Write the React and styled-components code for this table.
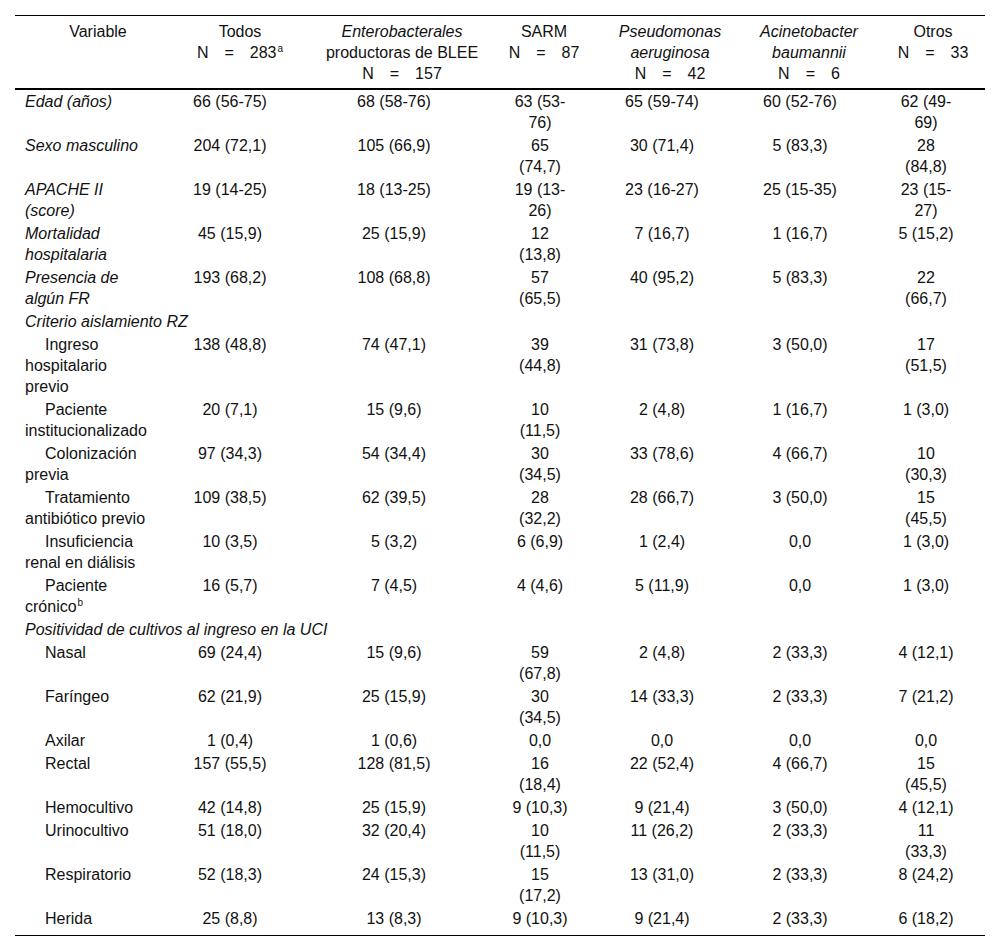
import React from "react";
import styled, { createGlobalStyle } from "styled-components";

const GlobalStyle = createGlobalStyle`
  html, body {
    margin: 0;
    padding: 0;
    background: #ffffff;
  }
  body {
    font-family: "Liberation Sans", Arial, sans-serif;
    color: #111111;
  }
`;

const Page = styled.div`
  padding: 15px 15px 0;
  width: 970px;
`;

const Table = styled.table`
  width: 970px;
  table-layout: fixed;
  border-collapse: separate;
  border-spacing: 0;
  border-top: 1px solid #000;
  border-bottom: 1px solid #000;
  font-size: 16px;
  line-height: 21px;
`;

const HeadCell = styled.th`
  font-weight: normal;
  text-align: center;
  vertical-align: top;
  padding: 5px 0 4px ${(p) => p.$shift * 2}px;
  border-bottom: 2px solid #000;
`;

const HeadLine = styled.span`
  display: block;
  white-space: nowrap;
  font-style: ${(p) => (p.$italic ? "italic" : "normal")};
`;

const Sup = styled.sup`
  font-size: 10px;
  line-height: 0;
  vertical-align: 6px;
  margin-left: 1px;
`;

const Row = styled.tr`
  &:last-child td {
    padding-bottom: 6px;
  }
`;

const LabelCell = styled.td`
  padding: 1px 10px;
  vertical-align: top;
  text-align: left;
  font-style: ${(p) => (p.$italic ? "italic" : "normal")};
  text-indent: ${(p) => (p.$indent ? "20px" : "0")};
`;

const SectionCell = styled.td`
  padding: 1px 10px;
  text-align: left;
  font-style: italic;
  white-space: nowrap;
`;

const ValueCell = styled.td`
  padding: 1px ${(p) => p.$pad}px;
  vertical-align: top;
  text-align: center;
`;

const columns = [
  { width: 146, pad: 10, shift: 10 },
  { width: 138, pad: 10, shift: 10 },
  { width: 190, pad: 6, shift: 8 },
  { width: 102, pad: 21, shift: 4 },
  { width: 142, pad: 10, shift: 8 },
  { width: 134, pad: 10, shift: 9 },
  { width: 118, pad: 29, shift: 7 },
];

const headers = [
  [{ t: "Variable" }],
  [{ t: "Todos" }, { t: "N\u2003=\u2003283", sup: "a" }],
  [
    { t: "Enterobacterales", i: true },
    { t: "productoras de BLEE" },
    { t: "N\u2003=\u2003157" },
  ],
  [{ t: "SARM" }, { t: "N\u2003=\u200387" }],
  [{ t: "Pseudomonas", i: true }, { t: "aeruginosa", i: true }, { t: "N\u2003=\u200342" }],
  [{ t: "Acinetobacter", i: true }, { t: "baumannii", i: true }, { t: "N\u2003=\u20036" }],
  [{ t: "Otros" }, { t: "N\u2003=\u200333" }],
];

const rows = [
  { label: "Edad (años)", italic: true, v: ["66 (56-75)", "68 (58-76)", "63 (53-76)", "65 (59-74)", "60 (52-76)", "62 (49-69)"] },
  { label: "Sexo masculino", italic: true, v: ["204 (72,1)", "105 (66,9)", "65 (74,7)", "30 (71,4)", "5 (83,3)", "28 (84,8)"] },
  { label: "APACHE II (score)", italic: true, v: ["19 (14-25)", "18 (13-25)", "19 (13-26)", "23 (16-27)", "25 (15-35)", "23 (15-27)"] },
  { label: "Mortalidad hospitalaria", italic: true, v: ["45 (15,9)", "25 (15,9)", "12 (13,8)", "7 (16,7)", "1 (16,7)", "5 (15,2)"] },
  { label: "Presencia de algún FR", italic: true, v: ["193 (68,2)", "108 (68,8)", "57 (65,5)", "40 (95,2)", "5 (83,3)", "22 (66,7)"] },
  { section: "Criterio aislamiento RZ" },
  { label: "Ingreso hospitalario previo", indent: true, v: ["138 (48,8)", "74 (47,1)", "39 (44,8)", "31 (73,8)", "3 (50,0)", "17 (51,5)"] },
  { label: "Paciente institucionalizado", indent: true, v: ["20 (7,1)", "15 (9,6)", "10 (11,5)", "2 (4,8)", "1 (16,7)", "1 (3,0)"] },
  { label: "Colonización previa", indent: true, v: ["97 (34,3)", "54 (34,4)", "30 (34,5)", "33 (78,6)", "4 (66,7)", "10 (30,3)"] },
  { label: "Tratamiento antibiótico previo", indent: true, v: ["109 (38,5)", "62 (39,5)", "28 (32,2)", "28 (66,7)", "3 (50,0)", "15 (45,5)"] },
  { label: "Insuficiencia renal en diálisis", indent: true, v: ["10 (3,5)", "5 (3,2)", "6 (6,9)", "1 (2,4)", "0,0", "1 (3,0)"] },
  { label: "Paciente crónico", sup: "b", indent: true, v: ["16 (5,7)", "7 (4,5)", "4 (4,6)", "5 (11,9)", "0,0", "1 (3,0)"] },
  { section: "Positividad de cultivos al ingreso en la UCI" },
  { label: "Nasal", indent: true, v: ["69 (24,4)", "15 (9,6)", "59 (67,8)", "2 (4,8)", "2 (33,3)", "4 (12,1)"] },
  { label: "Faríngeo", indent: true, v: ["62 (21,9)", "25 (15,9)", "30 (34,5)", "14 (33,3)", "2 (33,3)", "7 (21,2)"] },
  { label: "Axilar", indent: true, v: ["1 (0,4)", "1 (0,6)", "0,0", "0,0", "0,0", "0,0"] },
  { label: "Rectal", indent: true, v: ["157 (55,5)", "128 (81,5)", "16 (18,4)", "22 (52,4)", "4 (66,7)", "15 (45,5)"] },
  { label: "Hemocultivo", indent: true, v: ["42 (14,8)", "25 (15,9)", "9 (10,3)", "9 (21,4)", "3 (50,0)", "4 (12,1)"] },
  { label: "Urinocultivo", indent: true, v: ["51 (18,0)", "32 (20,4)", "10 (11,5)", "11 (26,2)", "2 (33,3)", "11 (33,3)"] },
  { label: "Respiratorio", indent: true, v: ["52 (18,3)", "24 (15,3)", "15 (17,2)", "13 (31,0)", "2 (33,3)", "8 (24,2)"] },
  { label: "Herida", indent: true, v: ["25 (8,8)", "13 (8,3)", "9 (10,3)", "9 (21,4)", "2 (33,3)", "6 (18,2)"] },
];

export default function App() {
  return (
    <Page>
      <GlobalStyle />
      <Table>
        <colgroup>
          {columns.map((c, i) => (
            <col key={i} style={{ width: c.width }} />
          ))}
        </colgroup>
        <thead>
          <tr>
            {headers.map((lines, i) => (
              <HeadCell key={i} $shift={columns[i].shift}>
                {lines.map((l, j) => (
                  <HeadLine key={j} $italic={l.i}>
                    {l.t}
                    {l.sup && <Sup>{l.sup}</Sup>}
                  </HeadLine>
                ))}
              </HeadCell>
            ))}
          </tr>
        </thead>
        <tbody>
          {rows.map((r, i) =>
            r.section ? (
              <Row key={i}>
                <SectionCell colSpan={7}>{r.section}</SectionCell>
              </Row>
            ) : (
              <Row key={i}>
                <LabelCell $italic={r.italic} $indent={r.indent}>
                  {r.label}
                  {r.sup && <Sup>{r.sup}</Sup>}
                </LabelCell>
                {r.v.map((v, j) => (
                  <ValueCell key={j} $pad={columns[j + 1].pad}>
                    {v}
                  </ValueCell>
                ))}
              </Row>
            )
          )}
        </tbody>
      </Table>
    </Page>
  );
}
